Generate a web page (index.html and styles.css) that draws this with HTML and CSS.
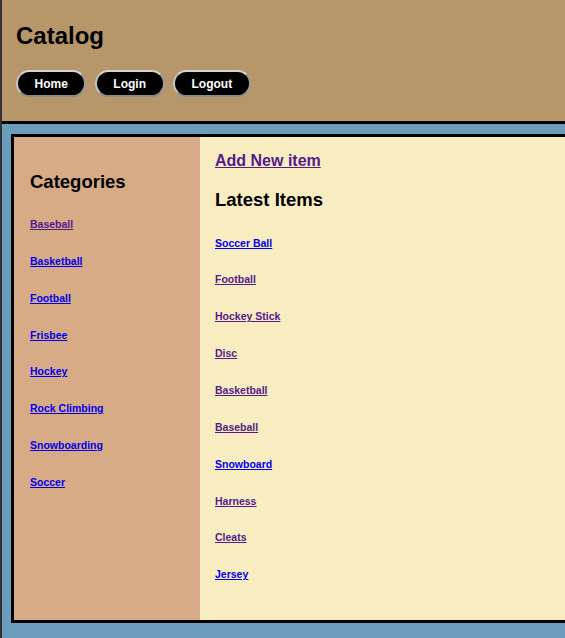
FILE: index.html
```html
<!DOCTYPE html>
<html>
<head>
<meta charset="utf-8">
<title>Catalog</title>
<link rel="stylesheet" href="styles.css">
</head>
<body>
<header class="top">
  <h1 class="brand">Catalog</h1>
  <nav class="nav">
    <a class="btn" href="#">Home</a>
    <a class="btn" href="#">Login</a>
    <a class="btn" href="#">Logout</a>
  </nav>
</header>
<div class="frame">
  <aside class="side">
    <h3 class="heading">Categories</h3>
    <ul class="list">
      <li><a class="visited" href="#">Baseball</a></li>
      <li><a href="#">Basketball</a></li>
      <li><a href="#">Football</a></li>
      <li><a href="#">Frisbee</a></li>
      <li><a href="#">Hockey</a></li>
      <li><a href="#">Rock Climbing</a></li>
      <li><a href="#">Snowboarding</a></li>
      <li><a href="#">Soccer</a></li>
    </ul>
  </aside>
  <main class="main">
    <a class="add visited" href="#">Add New item</a>
    <h3 class="heading latest">Latest Items</h3>
    <ul class="list items">
      <li><a href="#">Soccer Ball</a></li>
      <li><a class="visited" href="#">Football</a></li>
      <li><a class="visited" href="#">Hockey Stick</a></li>
      <li><a class="visited" href="#">Disc</a></li>
      <li><a class="visited" href="#">Basketball</a></li>
      <li><a class="visited" href="#">Baseball</a></li>
      <li><a href="#">Snowboard</a></li>
      <li><a class="visited" href="#">Harness</a></li>
      <li><a class="visited" href="#">Cleats</a></li>
      <li><a href="#">Jersey</a></li>
    </ul>
  </main>
</div>
</body>
</html>
```
FILE: styles.css
```css
html, body {
  margin: 0;
  padding: 0;
}
body {
  background: #6c9dbd;
  border-left: 2px solid #333;
  font-family: "Liberation Sans", Arial, sans-serif;
  height: 638px;
  overflow: hidden;
  box-sizing: border-box;
}
.top {
  background: #b79769;
  padding: 22px 0 0 14px;
  border-bottom: 3px solid #000;
  box-sizing: content-box;
  height: 99px;
}
.brand {
  margin: 0;
  font-size: 24px;
  line-height: 28px;
  font-weight: bold;
  color: #000;
}
.nav {
  display: flex;
  gap: 8.5px;
  margin-top: 20px;
}
.btn {
  display: block;
  background: #000;
  color: #fff;
  text-decoration: none;
  font-weight: bold;
  font-size: 12px;
  line-height: 15px;
  padding: 4.5px 16.5px 3.5px;
  border: 2px solid;
  border-color: #d4d4d4 #9a9a9a #8a8a8a #c4c4c4;
  border-radius: 14px;
}
.frame {
  display: flex;
  margin: 10px 0 0 9px;
  width: 620px;
  height: 489px;
  box-sizing: border-box;
  border: 3px solid #000;
}
.side {
  width: 186px;
  flex: none;
  background: #d6ab85;
  box-sizing: border-box;
  padding: 34px 15px 0 16px;
}
.main {
  flex: 1;
  background: #f8edc0;
  padding: 14px 15px 0 15px;
}
.heading {
  margin: 0;
  font-size: 18.5px;
  line-height: 22px;
  font-weight: bold;
  color: #000;
}
.list {
  list-style: none;
  margin: 25px 0 0 0;
  padding: 0;
  display: flex;
  flex-direction: column;
  gap: 24.86px;
}
.list li {
  font-size: 10.5px;
  line-height: 12px;
  font-weight: bold;
}
.items {
  margin-top: 26px;
}
a {
  color: #0000ee;
}
a.visited {
  color: #551a8b;
}
.add {
  display: block;
  font-size: 16px;
  line-height: 19px;
  font-weight: bold;
  width: max-content;
}
.latest {
  margin-top: 18.5px;
}
```
